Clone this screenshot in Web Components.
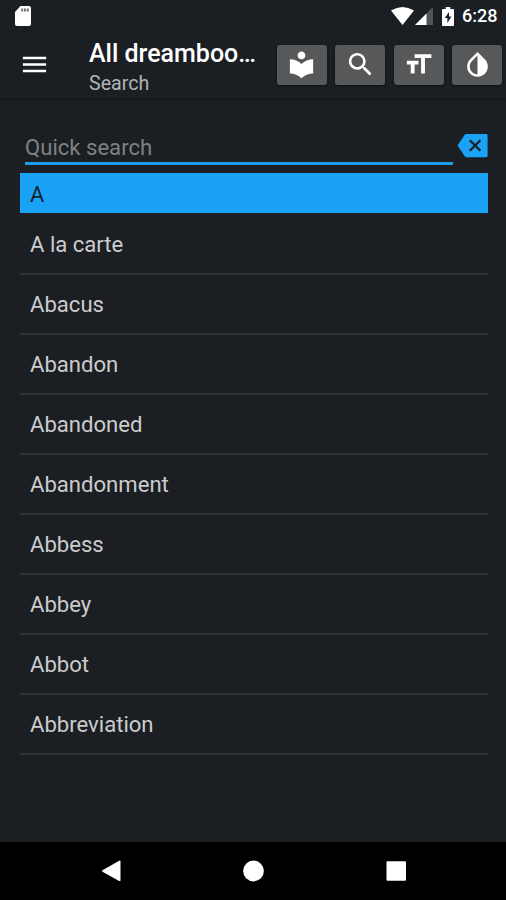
<!DOCTYPE html>
<html lang="en">
<head>
<meta charset="utf-8">
<title>All dreambooks</title>
<style>
html,body{margin:0;height:100%;background:#1b1f23;overflow:hidden}
body{font-family:Roboto,"Liberation Sans",sans-serif}
</style>
</head>
<body>
<dream-app></dream-app>
<script>
const define = (name, html) => customElements.define(name, class extends HTMLElement {
  constructor() {
    super();
    this.attachShadow({mode: 'open'}).innerHTML = html;
  }
});

const icons = {
  menu: 'M3 18h18v-2H3v2zm0-5h18v-2H3v2zm0-7v2h18V6H3z',
  library: 'M12 11.55C9.64 9.35 6.48 8 3 8v11c3.48 0 6.64 1.35 9 3.55 2.36-2.19 5.52-3.55 9-3.55V8c-3.48 0-6.64 1.35-9 3.55zM12 8c1.66 0 3-1.34 3-3s-1.34-3-3-3-3 1.34-3 3 1.34 3 3 3z',
  search: 'M15.5 14h-.79l-.28-.27C15.41 12.59 16 11.11 16 9.5 16 5.91 13.09 3 9.5 3S3 5.91 3 9.5 5.91 16 9.5 16c1.61 0 3.09-.59 4.23-1.57l.27.28v.79l5 4.99L20.49 19l-4.99-5zm-6 0C7.01 14 5 11.99 5 9.5S7.01 5 9.5 5 14 7.01 14 9.5 11.99 14 9.5 14z',
  size: 'M9 4v3h5v12h3V7h5V4H9zm-6 8h3v7h3v-7h3V9H3v3z',
  invert: 'M17.66 7.93L12 2.27 6.34 7.93c-3.12 3.12-3.12 8.19 0 11.31C7.9 20.8 9.95 21.58 12 21.58c2.05 0 4.1-.78 5.66-2.34 3.12-3.12 3.12-8.19 0-11.31zM12 19.59c-1.6 0-3.11-.62-4.24-1.76C6.62 16.69 6 15.19 6 13.59s.62-3.11 1.76-4.24L12 5.1v14.49z',
  clear: 'M22.6 3H7.4c-.69 0-1.23.25-1.59.78L.4 12l5.41 8.22c.36.53.9.78 1.59.78h15.2c.7 0 1.1-.5 1.1-1.1V4.1c0-.6-.4-1.1-1.1-1.1zm-3.9 12.5L17.5 16.7 14 13.2 10.5 16.7 9.3 15.5 12.8 12 9.3 8.5 10.5 7.3 14 10.8 17.5 7.3 18.7 8.5 15.2 12z'
};
customElements.define('md-icon', class extends HTMLElement {
  constructor() {
    super();
    this.attachShadow({mode: 'open'});
  }
  connectedCallback() {
    this.shadowRoot.innerHTML = `<style>:host{display:block;flex:none;width:31px;height:31px}svg{display:block;width:100%;height:100%}</style>
      <svg viewBox="0 0 24 24" fill="currentColor"><path d="${icons[this.getAttribute('name')]}"/></svg>`;
  }
});

define('status-bar', `<style>
:host{display:flex;align-items:center;height:32px;box-sizing:border-box;padding:0 9px 0 15px;color:#fff}
svg{display:block;flex:none}
.gap{flex:1}
.time{width:35px;font-size:18px;font-weight:500;line-height:32px}
</style>
<svg width="16" height="20" viewBox="0 0 16 20"><path fill="#fff" d="M5.5 0H14q2 0 2 2V18q0 2-2 2H2q-2 0-2-2V6z"/><path stroke="#777" stroke-width="2" d="M7.2 2.5v3M10 2.5v3M12.8 2.5v3"/></svg>
<div class="gap"></div>
<svg width="23" height="18" viewBox="0 0 23 18"><path fill="#fff" d="M0 3.6Q11.5-3.6 23 3.6L11.5 18z"/></svg>
<svg width="18" height="18" viewBox="0 0 18 18" style="margin-left:1px"><path fill="#50545a" d="M18 0v18H0z"/><path fill="#fff" d="M11.5 6.5V18H0z"/></svg>
<svg width="12" height="19" viewBox="0 0 12 20" preserveAspectRatio="none" style="margin:0 8px 0 9px"><path fill="#fff" d="M3.7 0h4.6v2H11q1 0 1 1v16q0 1-1 1H1q-1 0-1-1V3q0-1 1-1h2.7z"/><path fill="#1c1f24" d="M7 5.2L2.8 11.7h2.6V16.8L9.4 10H7z"/></svg>
<span class="time"><slot></slot></span>`);

define('tool-button', `<style>
:host{display:flex;align-items:center;justify-content:center;flex:none;width:50px;height:40px;border-radius:3px;background:#57585a;box-shadow:0 1px 3px #0008;color:#fff}
</style><slot></slot>`);

define('app-header', `<style>
:host{display:flex;align-items:flex-start;height:66px;box-sizing:border-box;padding:0 3px 0 19px;color:#fff;box-shadow:0 1px 3px #0005}
md-icon{margin-top:17px}
.text{flex:none;width:174px;margin-left:39px;padding-top:6px}
.title{font-size:25px;line-height:31px;font-weight:500;white-space:nowrap}
.sub{font-size:19.6px;line-height:26px;margin-top:2px;color:#b2b4b6}
.tools{display:flex;gap:8.6px;margin-top:12.5px;margin-left:13.7px}
</style>
<md-icon name="menu"></md-icon>
<div class="text"><div class="title"><slot name="title"></slot></div><div class="sub"><slot name="subtitle"></slot></div></div>
<div class="tools"><slot></slot></div>`);

define('quick-search', `<style>
:host{display:flex;height:35px;margin-left:5px;color:#1ba1f5}
.field{width:429px;height:32px;border-bottom:3px solid #1f9bea;color:#7e8184;font-size:22.1px;line-height:35px}
md-icon{margin:0 0 0 3.5px}
</style><div class="field"><slot></slot></div><md-icon name="clear"></md-icon>`);

define('section-head', `<style>
:host{display:block;height:40px;margin:8px 0 2px;padding-left:10px;background:#1aa2f6;color:#12242f;font-size:22px;line-height:43px}
</style><slot></slot>`);

define('word-row', `<style>
:host{display:block;height:60px;box-sizing:border-box;padding-left:10px;border-bottom:2px solid #2f3337;color:#cbcccd;font-size:22.1px;line-height:58px}
</style><slot></slot>`);

define('nav-bar', `<style>
:host{display:grid;grid-template-columns:repeat(3,142.5px);justify-content:center;align-items:center;justify-items:center;height:58px;background:#000}
svg{display:block}
</style>
<svg width="22" height="22"><path fill="#fff" d="M2.5 10.2L19.2.7q1.3-.6 1.3.7v18.8q0 1.3-1.3.7L2.5 11.8q-1-.8 0-1.6z"/></svg>
<svg width="22" height="22"><circle cx="11.5" cy="11" r="10.4" fill="#fff"/></svg>
<svg width="22" height="22"><rect x="1.5" y="1.3" width="19.5" height="19.5" rx="1.2" fill="#fff"/></svg>`);

define('dream-app', `<style>
:host{display:flex;flex-direction:column;height:900px;background:#1b1f23}
main{flex:1;padding:32px 18.5px 0 20px}
</style>
<status-bar>6:28</status-bar>
<app-header><span slot="title">All dreamboo…</span><span slot="subtitle">Search</span>
<tool-button><md-icon name="library"></md-icon></tool-button>
<tool-button><md-icon name="search"></md-icon></tool-button>
<tool-button><md-icon name="size"></md-icon></tool-button>
<tool-button><md-icon name="invert"></md-icon></tool-button>
</app-header>
<main>
<quick-search>Quick search</quick-search>
<section-head>A</section-head>
${['A la carte','Abacus','Abandon','Abandoned','Abandonment','Abbess','Abbey','Abbot','Abbreviation'].map(w => `<word-row>${w}</word-row>`).join('')}
</main>
<nav-bar></nav-bar>`);
</script>
</body>
</html>
